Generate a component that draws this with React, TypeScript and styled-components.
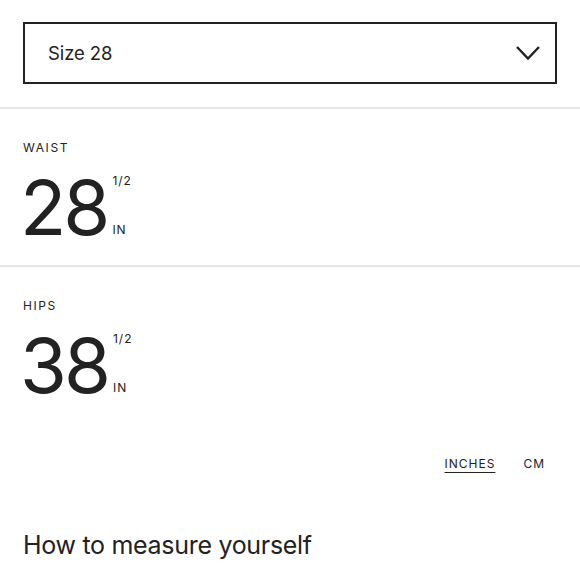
import React from "react";
import styled, { createGlobalStyle } from "styled-components";

const Global = createGlobalStyle`
  body {
    margin: 0;
    background: #fff;
    font-family: Inter, "Noto Sans", sans-serif;
    color: #222;
  }
`;

const Page = styled.div`
  width: 580px;
`;

const SelectWrap = styled.div`
  padding: 22px 23px 23px 23px;
  border-bottom: 2px solid #e6e6e6;
`;

const Select = styled.div`
  height: 58px;
  border: 2px solid #222;
  display: flex;
  align-items: center;
  justify-content: space-between;
  padding: 0 14px 0 23px;
  font-size: 18.5px;
  letter-spacing: -0.1px;
  color: #222;
`;

const Section = styled.div<{ $last?: boolean }>`
  padding: 32px 23px 20px;
  border-bottom: ${(p) => (p.$last ? "none" : "2px solid #e6e6e6")};
`;

const Label = styled.div`
  font-size: 12px;
  letter-spacing: 1.6px;
  text-transform: uppercase;
  line-height: 14px;
`;

const ValueRow = styled.div`
  display: flex;
  align-items: stretch;
  margin-top: 14px;
`;

const Big = styled.div`
  font-size: 76px;
  line-height: 76px;
  letter-spacing: -3px;
  margin-left: -3px;
  font-weight: 400;
`;

const Side = styled.div`
  display: flex;
  flex-direction: column;
  justify-content: space-between;
  margin-left: 5px;
  padding: 6px 0 9px;
  font-size: 12px;
  letter-spacing: 1px;
  line-height: 12px;
`;

const Units = styled.div`
  display: flex;
  justify-content: flex-end;
  gap: 28px;
  padding: 33px 35px 0 0;
  font-size: 12px;
  letter-spacing: 1px;
`;

const Unit = styled.span<{ $active?: boolean }>`
  text-decoration: ${(p) => (p.$active ? "underline" : "none")};
  text-underline-offset: 4px;
  text-decoration-thickness: 1px;
`;

const Heading = styled.h2`
  margin: 59px 0 0 23px;
  font-size: 25px;
  font-weight: 400;
  letter-spacing: -0.3px;
`;

const Measure = ({ label, value }: { label: string; value: string }) => (
  <>
    <Label>{label}</Label>
    <ValueRow>
      <Big>{value}</Big>
      <Side>
        <span>1/2</span>
        <span>IN</span>
      </Side>
    </ValueRow>
  </>
);

export default function App() {
  return (
    <Page>
      <Global />
      <SelectWrap>
        <Select>
          <span>Size 28</span>
          <svg width="26" height="16" viewBox="0 0 26 16">
            <path d="M2 2 L13 13.5 L24 2" fill="none" stroke="#222" strokeWidth="2.4" />
          </svg>
        </Select>
      </SelectWrap>
      <Section>
        <Measure label="Waist" value="28" />
      </Section>
      <Section $last>
        <Measure label="Hips" value="38" />
      </Section>
      <Units>
        <Unit $active>INCHES</Unit>
        <Unit>CM</Unit>
      </Units>
      <Heading>How to measure yourself</Heading>
    </Page>
  );
}
